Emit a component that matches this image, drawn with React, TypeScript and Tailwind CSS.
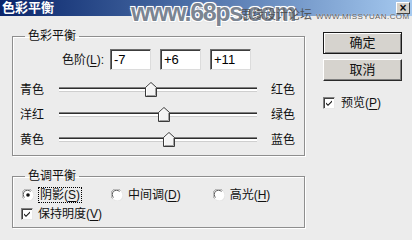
import React from "react";

const FONT = "font-['Liberation_Sans','Noto_Sans_CJK_SC',sans-serif]";

const Mn = ({ c }: { c: string }) => <span className="underline underline-offset-[2px]">{c}</span>;

const Radio = ({ checked }: { checked?: boolean }) => (
  <svg width="12" height="12" viewBox="0 0 12 12" className="shrink-0">
    <circle cx="6" cy="6" r="5.5" fill="#fff" />
    <path d="M1.5 9.5 A5.5 5.5 0 0 1 9.5 1.5" stroke="#9a9a9a" strokeWidth="1" fill="none" />
    <path d="M2.5 8.5 A4.2 4.2 0 0 1 8.5 2.5" stroke="#5a5a5a" strokeWidth="1" fill="none" />
    <path d="M10.5 2.5 A5.5 5.5 0 0 1 2.5 10.5" stroke="#e4e4e4" strokeWidth="1" fill="none" />
    {checked && <circle cx="6" cy="6" r="1.8" fill="#111" />}
  </svg>
);

const Check = ({ checked }: { checked?: boolean }) => (
  <div className="w-[12px] h-[12px] shrink-0 bg-white border border-t-[#808080] border-l-[#808080] border-b-[#e8e8e8] border-r-[#e8e8e8] shadow-[inset_1px_1px_0_#404040]">
    {checked && (
      <svg width="10" height="10" viewBox="0 0 10 10">
        <path d="M2 4.5 L4 6.5 L8 2.5 L8 4 L4 8 L2 6 Z" fill="#111" />
      </svg>
    )}
  </div>
);

const Field = ({ value }: { value: string }) => (
  <div className="w-[41px] h-[21px] bg-white border border-t-[#6e6e6e] border-l-[#6e6e6e] border-b-[#dcdcdc] border-r-[#dcdcdc] shadow-[inset_1px_1px_0_#3c3c3c] flex items-center pl-[3px] text-[13px] text-black">
    {value}
  </div>
);

const Slider = ({ left, right, value }: { left: string; right: string; value: number }) => {
  const pos = ((value + 100) / 200) * 198;
  return (
    <div className="h-[25px] flex items-center">
      <span className="w-[39px] pl-[7px] box-content text-[12px] leading-[14px]">{left}</span>
      <div className="relative w-[198px] h-[5px] bg-white border-t border-t-[#808080] border-b border-b-[#cfcfcf] shadow-[inset_0_1px_0_#2e2e2e]">
        <svg
          width="12"
          height="15"
          viewBox="0 0 12 15"
          className="absolute top-[-6px]"
          style={{ left: pos - 6 }}
        >
          <path d="M0.5 5.5 L6 0.5 L11.5 5.5 L11.5 14.5 L0.5 14.5 Z" fill="#f4f4f4" stroke="#3a3a3a" />
          <path d="M1.5 6 L6 1.9 M1.5 6 L1.5 13.5" stroke="#fff" fill="none" />
          <path d="M10.5 6 L10.5 13.5 L1.5 13.5" stroke="#a0a0a0" fill="none" />
        </svg>
      </div>
      <span className="ml-[14px] text-[12px] leading-[14px]">{right}</span>
    </div>
  );
};

const Button = ({ label, primary }: { label: string; primary?: boolean }) => (
  <div
    className={
      "w-[79px] h-[22px] bg-[#d6d3ce] flex items-center justify-center text-[13px] border " +
      (primary
        ? "border-[#1a1a1a] shadow-[inset_1px_1px_0_#fff,inset_-1px_-1px_0_#808080]"
        : "border-t-white border-l-white border-b-[#2a2a2a] border-r-[#2a2a2a] shadow-[inset_-1px_-1px_0_#808080]")
    }
  >
    {label}
  </div>
);

export default function App() {
  return (
    <div className={`relative w-[412px] h-[240px] overflow-hidden bg-[#ececec] text-[#111] ${FONT}`}>
      {/* title bar */}
      <div className="relative h-[16px] bg-gradient-to-r from-[#0a246a] to-[#a6caf0] flex items-center">
        <span className="ml-[2px] text-white font-bold text-[13px] leading-[16px]">色彩平衡</span>
        <div className="ml-auto mr-[2px] w-[14px] h-[12px] bg-[#d4d0c8] border border-t-white border-l-white border-b-[#404040] border-r-[#404040] flex items-center justify-center text-[12px] font-bold leading-none">
          ×
        </div>
      </div>

      {/* watermark over the title bar */}
      <div className="absolute left-[131px] top-[-2px] text-[25px] leading-[28px] font-bold tracking-[-1.3px] text-[#7b8592] [text-shadow:1px_1px_0_#fff,-1px_-1px_0_#fff,1px_-1px_0_#fff,-1px_1px_0_#fff,0_0_3px_#bbb]">
        www.68ps.com
      </div>
      <div className="absolute left-[240px] top-[9px] text-[12px] leading-[13px] text-[#4a4a4a]/90">
        思缘设计论坛
      </div>
      <div className="absolute left-[316px] top-[12px] text-[8px] leading-[9px] tracking-[0.4px] text-[#5a5a5a] [text-shadow:0_0_1px_#fff]">
        WWW.MISSYUAN.COM
      </div>

      <div className="flex">
        {/* left column */}
        <div className="ml-[12px] mt-[13px] w-[293px] flex flex-col">
          <fieldset className="h-[127px] border border-[#8e8e8e] shadow-[1px_1px_0_#fff,inset_1px_1px_0_#fff]">
            <legend className="ml-[12px] px-[3px] text-[12px] leading-[14px]">色彩平衡</legend>
            <div className="mt-[6px] flex items-center">
              <span className="ml-[49px] text-[12px] leading-[14px]">
                色阶(<Mn c="L" />):
              </span>
              <div className="ml-[6px] flex gap-[9px]">
                <Field value="-7" />
                <Field value="+6" />
                <Field value="+11" />
              </div>
            </div>
            <div className="mt-[7px] flex flex-col">
              <Slider left="青色" right="红色" value={-7} />
              <Slider left="洋红" right="绿色" value={6} />
              <Slider left="黄色" right="蓝色" value={11} />
            </div>
          </fieldset>

          <fieldset className="mt-[13px] h-[59px] border border-[#8e8e8e] shadow-[1px_1px_0_#fff,inset_1px_1px_0_#fff]">
            <legend className="ml-[12px] px-[3px] text-[12px] leading-[14px]">色调平衡</legend>
            <div className="mt-[4px] h-[16px] flex items-center text-[12px] leading-[14px]">
              <div className="ml-[9px] flex items-center">
                <Radio checked />
                <span className="ml-[4px] px-[1px] border border-dotted border-black">
                  阴影(<Mn c="S" />)
                </span>
              </div>
              <div className="ml-[29px] flex items-center">
                <Radio />
                <span className="ml-[5px]">
                  中间调(<Mn c="D" />)
                </span>
              </div>
              <div className="ml-[32px] flex items-center">
                <Radio />
                <span className="ml-[5px]">
                  高光(<Mn c="H" />)
                </span>
              </div>
            </div>
            <div className="mt-[3px] h-[16px] flex items-center text-[12px] leading-[14px]">
              <div className="ml-[8px]">
                <Check checked />
              </div>
              <span className="ml-[5px]">
                保持明度(<Mn c="V" />)
              </span>
            </div>
          </fieldset>
        </div>

        {/* right column */}
        <div className="ml-[18px] mt-[16px] flex flex-col">
          <Button label="确定" primary />
          <div className="mt-[5px]">
            <Button label="取消" />
          </div>
          <div className="mt-[15px] flex items-center text-[12px] leading-[14px]">
            <Check checked />
            <span className="ml-[6px]">
              预览(<Mn c="P" />)
            </span>
          </div>
        </div>
      </div>
    </div>
  );
}
